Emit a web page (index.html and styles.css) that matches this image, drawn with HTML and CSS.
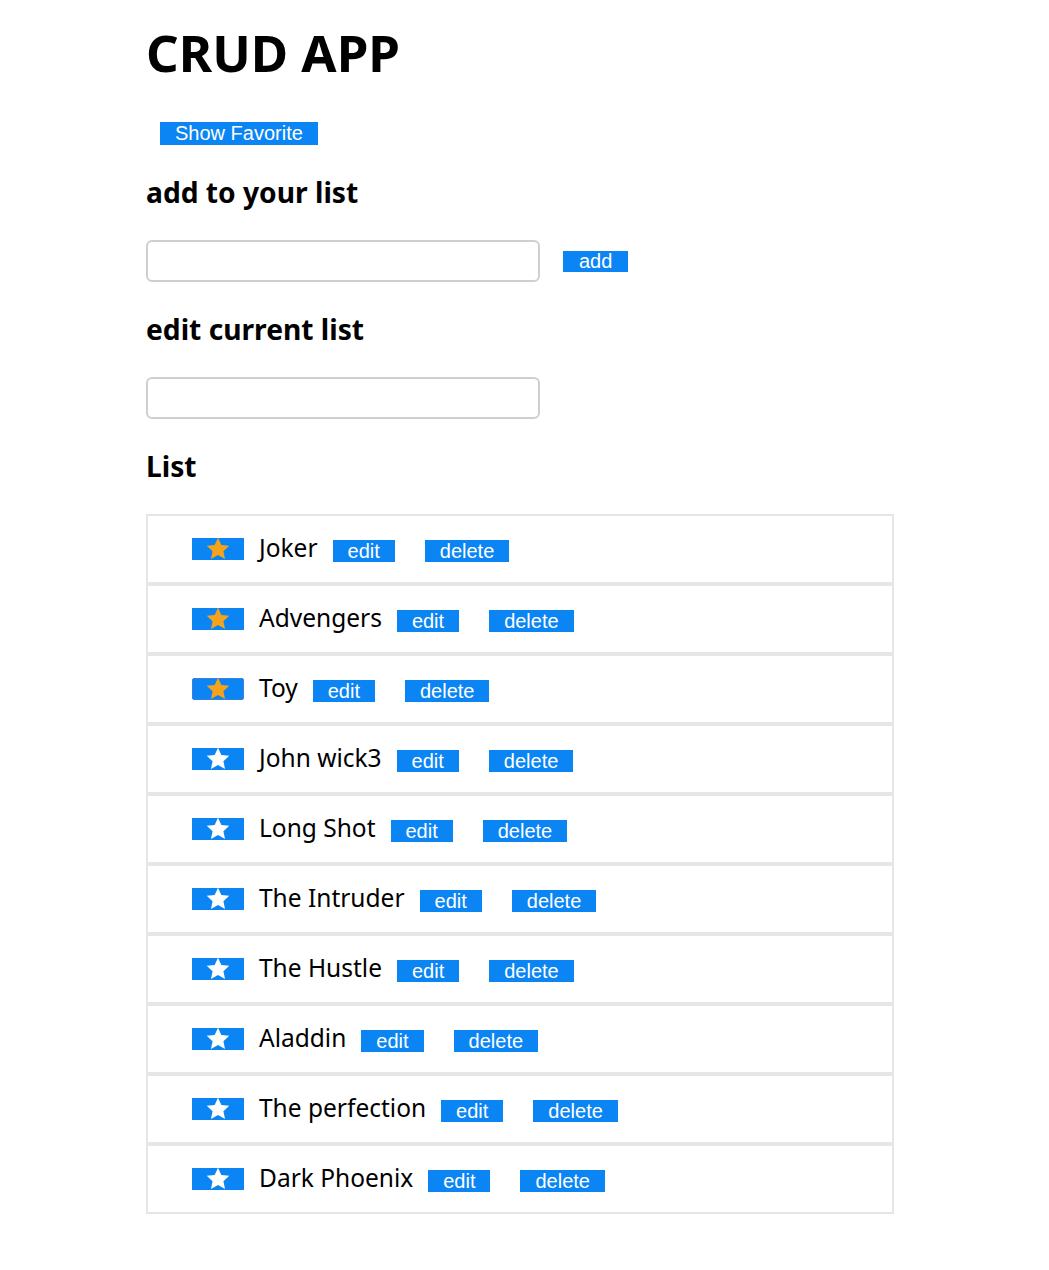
FILE: index.html
```html
<!DOCTYPE html>
<html>
<head>
<meta charset="utf-8">
<link rel="stylesheet" href="styles.css">
</head>
<body>
<div class="app">
  <h1 class="title">CRUD APP</h1>
  <div class="fav-row"><button class="btn btn-fav">Show Favorite</button></div>
  <h2 class="heading">add to your list</h2>
  <div class="form-row">
    <input class="text-input" type="text">
    <button class="btn btn-add">add</button>
  </div>
  <h2 class="heading">edit current list</h2>
  <div class="form-row">
    <input class="text-input" type="text">
  </div>
  <h2 class="heading">List</h2>
  <ul class="list">
    <li class="item"><button class="star-btn fav"><svg viewBox="0 0 24 24"><polygon points="12,1.5 15.1,8.2 22.4,9 17,14 18.5,21.2 12,17.6 5.5,21.2 7,14 1.6,9 8.9,8.2"/></svg></button><span class="name">Joker</span><button class="btn">edit</button><button class="btn btn-del">delete</button></li>
    <li class="item"><button class="star-btn fav"><svg viewBox="0 0 24 24"><polygon points="12,1.5 15.1,8.2 22.4,9 17,14 18.5,21.2 12,17.6 5.5,21.2 7,14 1.6,9 8.9,8.2"/></svg></button><span class="name">Advengers</span><button class="btn">edit</button><button class="btn btn-del">delete</button></li>
    <li class="item"><button class="star-btn fav focus"><svg viewBox="0 0 24 24"><polygon points="12,1.5 15.1,8.2 22.4,9 17,14 18.5,21.2 12,17.6 5.5,21.2 7,14 1.6,9 8.9,8.2"/></svg></button><span class="name">Toy</span><button class="btn">edit</button><button class="btn btn-del">delete</button></li>
    <li class="item"><button class="star-btn"><svg viewBox="0 0 24 24"><polygon points="12,1.5 15.1,8.2 22.4,9 17,14 18.5,21.2 12,17.6 5.5,21.2 7,14 1.6,9 8.9,8.2"/></svg></button><span class="name">John wick3</span><button class="btn">edit</button><button class="btn btn-del">delete</button></li>
    <li class="item"><button class="star-btn"><svg viewBox="0 0 24 24"><polygon points="12,1.5 15.1,8.2 22.4,9 17,14 18.5,21.2 12,17.6 5.5,21.2 7,14 1.6,9 8.9,8.2"/></svg></button><span class="name">Long Shot</span><button class="btn">edit</button><button class="btn btn-del">delete</button></li>
    <li class="item"><button class="star-btn"><svg viewBox="0 0 24 24"><polygon points="12,1.5 15.1,8.2 22.4,9 17,14 18.5,21.2 12,17.6 5.5,21.2 7,14 1.6,9 8.9,8.2"/></svg></button><span class="name">The Intruder</span><button class="btn">edit</button><button class="btn btn-del">delete</button></li>
    <li class="item"><button class="star-btn"><svg viewBox="0 0 24 24"><polygon points="12,1.5 15.1,8.2 22.4,9 17,14 18.5,21.2 12,17.6 5.5,21.2 7,14 1.6,9 8.9,8.2"/></svg></button><span class="name">The Hustle</span><button class="btn">edit</button><button class="btn btn-del">delete</button></li>
    <li class="item"><button class="star-btn"><svg viewBox="0 0 24 24"><polygon points="12,1.5 15.1,8.2 22.4,9 17,14 18.5,21.2 12,17.6 5.5,21.2 7,14 1.6,9 8.9,8.2"/></svg></button><span class="name">Aladdin</span><button class="btn">edit</button><button class="btn btn-del">delete</button></li>
    <li class="item"><button class="star-btn"><svg viewBox="0 0 24 24"><polygon points="12,1.5 15.1,8.2 22.4,9 17,14 18.5,21.2 12,17.6 5.5,21.2 7,14 1.6,9 8.9,8.2"/></svg></button><span class="name">The perfection</span><button class="btn">edit</button><button class="btn btn-del">delete</button></li>
    <li class="item"><button class="star-btn"><svg viewBox="0 0 24 24"><polygon points="12,1.5 15.1,8.2 22.4,9 17,14 18.5,21.2 12,17.6 5.5,21.2 7,14 1.6,9 8.9,8.2"/></svg></button><span class="name">Dark Phoenix</span><button class="btn">edit</button><button class="btn btn-del">delete</button></li>
  </ul>
</div>
</body>
</html>
```
FILE: styles.css
```css
html, body {
  margin: 0;
  padding: 0;
  background: #ffffff;
}
body {
  font-family: "Noto Sans", "Open Sans", sans-serif;
  color: #000;
}
.app {
  padding: 22px 0 40px 146px;
  width: 748px;
}
.title {
  margin: 0;
  font-size: 51px;
  line-height: 60px;
  font-weight: 700;
  letter-spacing: 0;
}
.fav-row {
  margin-top: 40px;
  padding-left: 14px;
  display: flex;
}
.btn {
  font-family: "Liberation Sans", Arial, sans-serif;
  font-size: 20px;
  line-height: 22px;
  height: 22px;
  padding: 0 15px;
  border: 0;
  border-radius: 0;
  background: #0b85f4;
  color: #ffffff;
  margin: 0;
}
.btn-fav {
  height: 23px;
  line-height: 23px;
  padding: 0 15px;
}
.heading {
  margin: 30px 0 0;
  font-size: 28.2px;
  line-height: 34px;
  font-weight: 700;
}
.form-row {
  display: flex;
  align-items: center;
  margin-top: 31px;
  gap: 23px;
}
.text-input {
  width: 394px;
  height: 42px;
  box-sizing: border-box;
  border: 2px solid #cfcfcf;
  border-radius: 6px;
  margin: 0;
  padding: 0 8px;
  font-size: 18px;
  background: #fff;
}
.btn-add {
  height: 21px;
  line-height: 21px;
  padding: 0 16px;
}
.list {
  list-style: none;
  margin: 31px 0 0;
  padding: 0;
  width: 748px;
}
.item {
  box-sizing: border-box;
  height: 70px;
  border: 2px solid #e6e6e6;
  display: flex;
  align-items: center;
  padding-left: 44px;
}
.star-btn {
  width: 52px;
  height: 22px;
  border: 0;
  padding: 0;
  margin: 0;
  background: #0b85f4;
  display: flex;
  align-items: center;
  justify-content: center;
  margin-top: 0;
}
.star-btn svg {
  width: 26px;
  height: 26px;
  fill: #ffffff;
}
.star-btn.fav svg {
  fill: #f7a21b;
}
.star-btn.focus {
  border: 1px solid #3f7ed8;
  border-radius: 2px;
}
.name {
  font-size: 24.5px;
  line-height: 30px;
  margin-left: 15px;
  margin-right: 15px;
  margin-top: -2px;
}
.item .btn {
  margin-top: 4px;
}
.item .btn-del {
  margin-left: 30px;
}
```
